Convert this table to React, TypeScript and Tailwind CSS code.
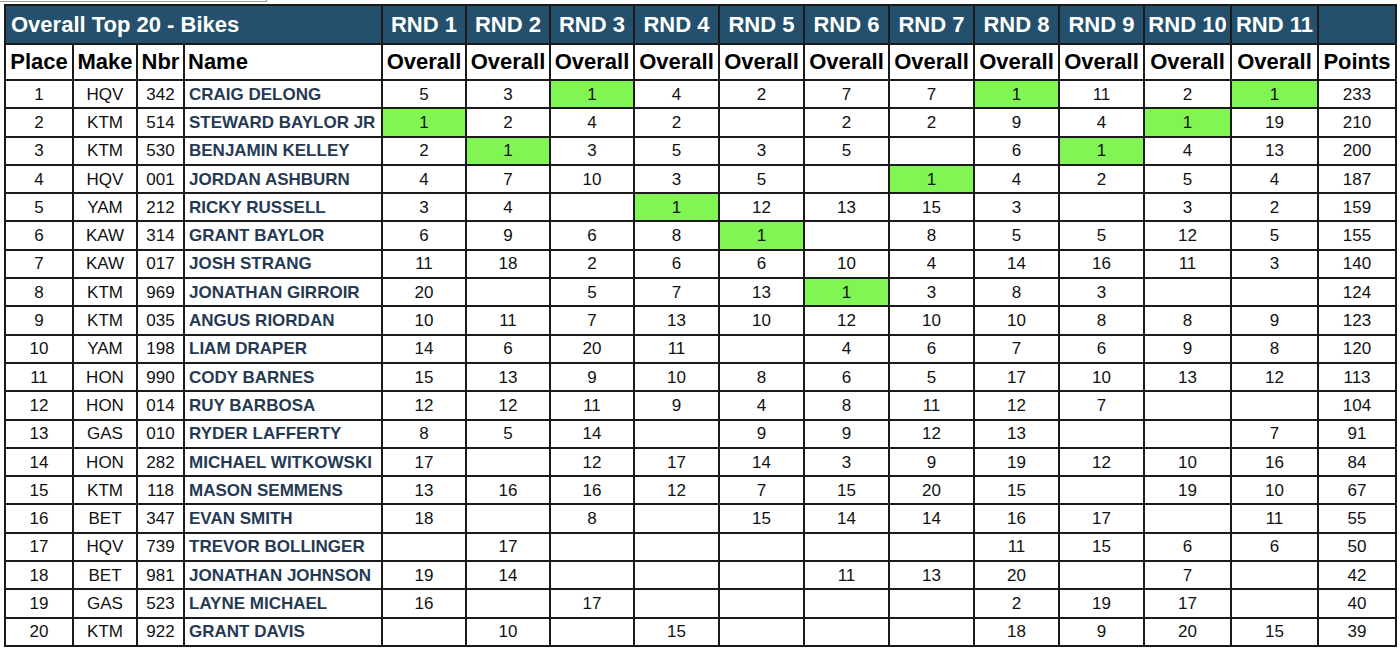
import React from 'react';

type Rider = {
  place: number;
  make: string;
  nbr: string;
  name: string;
  rounds: (number | null)[];
  points: number;
};

const n = null;

const riders: Rider[] = [
  { place: 1, make: 'HQV', nbr: '342', name: 'CRAIG DELONG', rounds: [5, 3, 1, 4, 2, 7, 7, 1, 11, 2, 1], points: 233 },
  { place: 2, make: 'KTM', nbr: '514', name: 'STEWARD BAYLOR JR', rounds: [1, 2, 4, 2, n, 2, 2, 9, 4, 1, 19], points: 210 },
  { place: 3, make: 'KTM', nbr: '530', name: 'BENJAMIN KELLEY', rounds: [2, 1, 3, 5, 3, 5, n, 6, 1, 4, 13], points: 200 },
  { place: 4, make: 'HQV', nbr: '001', name: 'JORDAN ASHBURN', rounds: [4, 7, 10, 3, 5, n, 1, 4, 2, 5, 4], points: 187 },
  { place: 5, make: 'YAM', nbr: '212', name: 'RICKY RUSSELL', rounds: [3, 4, n, 1, 12, 13, 15, 3, n, 3, 2], points: 159 },
  { place: 6, make: 'KAW', nbr: '314', name: 'GRANT BAYLOR', rounds: [6, 9, 6, 8, 1, n, 8, 5, 5, 12, 5], points: 155 },
  { place: 7, make: 'KAW', nbr: '017', name: 'JOSH STRANG', rounds: [11, 18, 2, 6, 6, 10, 4, 14, 16, 11, 3], points: 140 },
  { place: 8, make: 'KTM', nbr: '969', name: 'JONATHAN GIRROIR', rounds: [20, n, 5, 7, 13, 1, 3, 8, 3, n, n], points: 124 },
  { place: 9, make: 'KTM', nbr: '035', name: 'ANGUS RIORDAN', rounds: [10, 11, 7, 13, 10, 12, 10, 10, 8, 8, 9], points: 123 },
  { place: 10, make: 'YAM', nbr: '198', name: 'LIAM DRAPER', rounds: [14, 6, 20, 11, n, 4, 6, 7, 6, 9, 8], points: 120 },
  { place: 11, make: 'HON', nbr: '990', name: 'CODY BARNES', rounds: [15, 13, 9, 10, 8, 6, 5, 17, 10, 13, 12], points: 113 },
  { place: 12, make: 'HON', nbr: '014', name: 'RUY BARBOSA', rounds: [12, 12, 11, 9, 4, 8, 11, 12, 7, n, n], points: 104 },
  { place: 13, make: 'GAS', nbr: '010', name: 'RYDER LAFFERTY', rounds: [8, 5, 14, n, 9, 9, 12, 13, n, n, 7], points: 91 },
  { place: 14, make: 'HON', nbr: '282', name: 'MICHAEL WITKOWSKI', rounds: [17, n, 12, 17, 14, 3, 9, 19, 12, 10, 16], points: 84 },
  { place: 15, make: 'KTM', nbr: '118', name: 'MASON SEMMENS', rounds: [13, 16, 16, 12, 7, 15, 20, 15, n, 19, 10], points: 67 },
  { place: 16, make: 'BET', nbr: '347', name: 'EVAN SMITH', rounds: [18, n, 8, n, 15, 14, 14, 16, 17, n, 11], points: 55 },
  { place: 17, make: 'HQV', nbr: '739', name: 'TREVOR BOLLINGER', rounds: [n, 17, n, n, n, n, n, 11, 15, 6, 6], points: 50 },
  { place: 18, make: 'BET', nbr: '981', name: 'JONATHAN JOHNSON', rounds: [19, 14, n, n, n, 11, 13, 20, n, 7, n], points: 42 },
  { place: 19, make: 'GAS', nbr: '523', name: 'LAYNE MICHAEL', rounds: [16, n, 17, n, n, n, n, 2, 19, 17, n], points: 40 },
  { place: 20, make: 'KTM', nbr: '922', name: 'GRANT DAVIS', rounds: [n, 10, n, 15, n, n, n, 18, 9, 20, 15], points: 39 },
];

const roundWidths = [84, 84, 84, 85, 85, 85, 85, 85, 85, 87, 87];

export default function App() {
  return (
    <div className="min-h-screen bg-white" style={{ fontFamily: '"Liberation Sans", Arial, sans-serif' }}>
      <div className="w-[267px] h-[2px] border-b border-r border-[#9a9a9a]" />
      <div className="pl-[4px] pt-[2px]">
        <table className="table-fixed border-collapse border-2 border-[#1a1a1a] w-[1392px]">
          <colgroup>
            <col className="w-[68px]" />
            <col className="w-[64px]" />
            <col className="w-[47px]" />
            <col className="w-[198px]" />
            {roundWidths.map((w, i) => (
              <col key={i} style={{ width: w }} />
            ))}
            <col className="w-[78px]" />
          </colgroup>
          <thead>
            <tr className="h-[39px] bg-[#24506d] text-white text-[22px] font-bold">
              <th colSpan={4} className="border-2 border-[#1a1a1a] text-left pl-[5px] leading-none">
                Overall Top 20 - Bikes
              </th>
              {roundWidths.map((_, i) => (
                <th key={i} className="border-2 border-[#1a1a1a] text-center leading-none whitespace-nowrap">
                  RND {i + 1}
                </th>
              ))}
              <th className="border-2 border-[#1a1a1a]" />
            </tr>
            <tr className="h-[36px] text-black text-[22px] font-bold">
              <th className="border-2 border-[#1a1a1a] text-center px-0 leading-none">Place</th>
              <th className="border-2 border-[#1a1a1a] text-center px-0 leading-none">Make</th>
              <th className="border-2 border-[#1a1a1a] text-center px-0 leading-none">Nbr</th>
              <th className="border-2 border-[#1a1a1a] text-left pl-[3px] leading-none">Name</th>
              {roundWidths.map((_, i) => (
                <th key={i} className="border-2 border-[#1a1a1a] text-center px-0 leading-none">
                  Overall
                </th>
              ))}
              <th className="border-2 border-[#1a1a1a] text-center px-0 leading-none">Points</th>
            </tr>
          </thead>
          <tbody>
            {riders.map((r) => (
              <tr key={r.place} className="h-[28.3px] text-[17px] text-[#111]">
                <td className="border-2 border-[#1a1a1a] text-center leading-none">{r.place}</td>
                <td className="border-2 border-[#1a1a1a] text-center leading-none">{r.make}</td>
                <td className="border-2 border-[#1a1a1a] text-center leading-none">{r.nbr}</td>
                <td className="border-2 border-[#1a1a1a] pl-[4px] font-bold text-[#253a52] whitespace-nowrap leading-none">
                  {r.name}
                </td>
                {r.rounds.map((v, i) => (
                  <td
                    key={i}
                    className={`border-2 border-[#1a1a1a] text-center leading-none ${v === 1 ? 'bg-[#80f553]' : ''}`}
                  >
                    {v ?? ''}
                  </td>
                ))}
                <td className="border-2 border-[#1a1a1a] text-center leading-none">{r.points}</td>
              </tr>
            ))}
          </tbody>
        </table>
      </div>
    </div>
  );
}
